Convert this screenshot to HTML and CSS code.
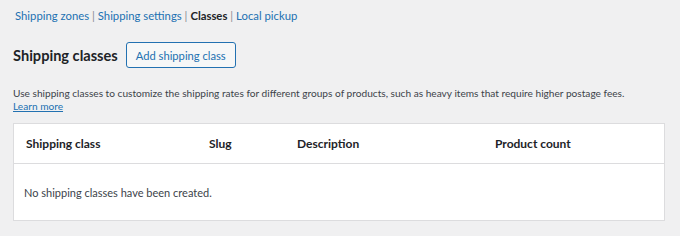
FILE: index.html
```html
<!DOCTYPE html>
<html lang="en">
<head>
  <meta charset="UTF-8" />
  <title>Shipping classes</title>
  <link rel="stylesheet" href="styles.css">
</head>
<body>
  <div class="wrap">
    <ul class="subsubsub">
      <li><a href="#zones">Shipping zones</a> |</li>
      <li><a href="#settings">Shipping settings</a> |</li>
      <li><a href="#classes" class="current">Classes</a> |</li>
      <li><a href="#pickup">Local pickup</a></li>
    </ul>

    <div class="title-row">
      <h2>Shipping classes</h2>
      <button class="btn-secondary">Add shipping class</button>
    </div>

    <p class="intro">Use shipping classes to customize the shipping rates for different groups of products, such as heavy items that require higher postage fees.<br><a href="#learn">Learn more</a></p>

    <table class="classes-table">
      <thead>
        <tr>
          <th class="col-name">Shipping class</th>
          <th class="col-slug">Slug</th>
          <th class="col-desc">Description</th>
          <th class="col-count">Product count</th>
        </tr>
      </thead>
      <tbody>
        <tr>
          <td colspan="4" class="empty">No shipping classes have been created.</td>
        </tr>
      </tbody>
    </table>
  </div>
</body>
</html>
```

FILE: styles.css
```css
/* Global */
body {
  margin: 0;
  background: #f0f0f1;
  color: #3c434a;
  font-family: Lato, "Liberation Sans", Arial, sans-serif;
  font-size: 12px;
}
a {
  color: #2271b1;
}
.wrap {
  padding: 9px 15px 0 13px;
}

/* Sub navigation */
.subsubsub {
  list-style: none;
  margin: 0;
  padding: 0 0 0 2px;
  display: flex;
  gap: 3px;
  font-size: 11.3px;
  color: #8c8f94;
}
.subsubsub a {
  text-decoration: none;
}
.subsubsub a.current {
  color: #1d2327;
  font-weight: 700;
}

/* Title */
.title-row {
  display: flex;
  align-items: center;
  gap: 8px;
  margin-top: 20px;
}
.title-row h2 {
  margin: 1px 0 0;
  font-size: 14.6px;
  font-weight: 700;
  color: #1d2327;
}
.btn-secondary {
  font-family: inherit;
  font-size: 11.2px;
  color: #2271b1;
  background: #f6f7f7;
  border: 1px solid #2271b1;
  border-radius: 3px;
  padding: 0 9px;
  height: 26px;
}

.intro {
  margin: 19px 0 10px;
  line-height: 13px;
  font-size: 10.15px;
}

/* Table */
.classes-table {
  width: 100%;
  border-collapse: collapse;
  background: #fff;
  border: 1px solid #dcdcde;
}
.classes-table th {
  text-align: left;
  font-weight: 700;
  font-size: 12px;
  color: #1d2327;
  height: 39px;
  padding: 0 12px;
  border-bottom: 1px solid #dcdcde;
}
.col-name { width: 159px; }
.col-slug { width: 64px; }
.col-desc { width: 174px; }
.classes-table td.empty {
  height: 56px;
  padding: 0 10px;
  font-size: 11px;
}
```
